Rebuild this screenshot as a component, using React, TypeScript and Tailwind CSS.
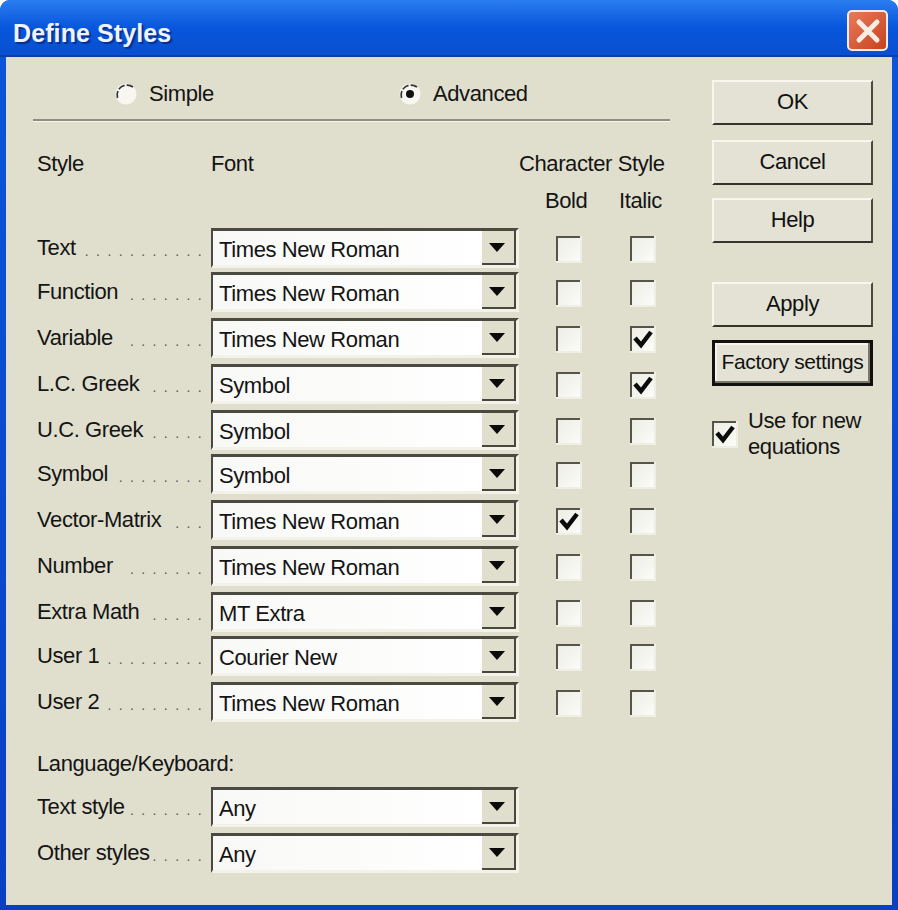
const rows = [
  { label: "Text", dots: 11, font: "Times New Roman", bold: false, italic: false, h: "h-[44px]" },
  { label: "Function", dots: 7, font: "Times New Roman", bold: false, italic: false, h: "h-[46px]" },
  { label: "Variable", dots: 7, font: "Times New Roman", bold: false, italic: true, h: "h-[46px]" },
  { label: "L.C. Greek", dots: 5, font: "Symbol", bold: false, italic: true, h: "h-[46px]" },
  { label: "U.C. Greek", dots: 5, font: "Symbol", bold: false, italic: false, h: "h-[44px]" },
  { label: "Symbol", dots: 8, font: "Symbol", bold: false, italic: false, h: "h-[46px]" },
  { label: "Vector-Matrix", dots: 3, font: "Times New Roman", bold: true, italic: false, h: "h-[46px]" },
  { label: "Number", dots: 7, font: "Times New Roman", bold: false, italic: false, h: "h-[46px]" },
  { label: "Extra Math", dots: 5, font: "MT Extra", bold: false, italic: false, h: "h-[44px]" },
  { label: "User 1", dots: 9, font: "Courier New", bold: false, italic: false, h: "h-[46px]" },
  { label: "User 2", dots: 9, font: "Times New Roman", bold: false, italic: false, h: "h-[46px]" },
];

function Check({ on }: { on: boolean }) {
  return (
    <span className="block w-[24px] h-[25px] bg-gradient-to-br from-[#eeeee6] to-[#fbfbf8] border-t-2 border-l-2 border-t-[#55554a] border-l-[#55554a] shadow-[1px_1px_0_1px_#efeee2]">
      {on && (
        <svg viewBox="0 0 22 23" className="w-[22px] h-[23px]">
          <path d="M3 10 L9 17 L19 4" fill="none" stroke="#0b0b0b" strokeWidth="4.5" />
        </svg>
      )}
    </span>
  );
}

function Radio({ on }: { on: boolean }) {
  return (
    <svg viewBox="0 0 24 24" className="w-[24px] h-[24px]">
      <circle cx="12" cy="12" r="10.5" fill="#f7f6f0" />
      <path d="M3.5 16 A 10 10 0 0 1 19 5" fill="none" stroke="#333" strokeWidth="1.7" strokeDasharray="7 2" />
      {on && <circle cx="12" cy="12" r="4" fill="#111" />}
    </svg>
  );
}

function Combo({ text }: { text: string }) {
  return (
    <div className="w-[308px] h-[40px] flex bg-white border-t-[3px] border-l-2 border-t-[#4a4a40] border-l-[#4a4a40] border-b-[3px] border-r-[3px] border-b-[#f3f2e8] border-r-[#f3f2e8]">
      <span className="flex-1 pl-[6px] leading-[38px] bg-gradient-to-r from-[#f8f8f6] to-white">{text}</span>
      <span className="w-[34px] pr-[2px] bg-[#e0dfce] border-r-2 border-b-2 border-r-[#47473d] border-b-[#47473d] flex items-center justify-center">
        <svg width="16" height="9" viewBox="0 0 16 9"><path d="M0 0H16L8 9Z" fill="#0a0a0a" /></svg>
      </span>
    </div>
  );
}

function Btn({ children, mt, def }: { children: string; mt: string; def?: boolean }) {
  return (
    <button
      className={`block w-[161px] text-center text-[#111] bg-[#e3e2d4] pb-[2px] ${mt} ${
        def
          ? "h-[46px] border-[3px] border-[#111] shadow-[inset_-2px_-2px_0_#77776a,inset_2px_2px_0_#f5f4ea] whitespace-nowrap text-[21px]"
          : "h-[45px] border-t-2 border-l-2 border-t-[#f8f7ee] border-l-[#f8f7ee] border-r-2 border-b-2 border-r-[#4a4a40] border-b-[#35352c]"
      }`}
    >
      {children}
    </button>
  );
}

function Label({ label, dots }: { label: string; dots: number }) {
  return (
    <div className="w-[174px] flex items-center justify-between pr-[2px] mt-[5px]">
      <span className="leading-[30px] whitespace-nowrap">{label}</span>
      <span className="text-[14px] tracking-[7.4px] text-[#555] whitespace-nowrap mt-[6px]">{".".repeat(dots)}</span>
    </div>
  );
}

export default function App() {
  return (
    <div className="w-[898px] h-[910px] flex flex-col overflow-hidden rounded-t-[10px] bg-[#0a4fd4] bg-gradient-to-b from-[#0a56dc] to-[#0a3fc4] font-['Liberation_Sans',sans-serif] text-[22px] tracking-[-0.4px] text-[#141414]">
      <div className="h-[57px] shrink-0 flex items-center justify-between pl-[13px] pr-[10px] pt-[6px] bg-gradient-to-b from-[#2a7cf0] via-[#0756dc] to-[#0a50d0] border-b-2 border-b-[#0b3ea8]">
        <span className="text-[25px] font-bold text-[#eef4ff] tracking-[0.1px] mt-[6px] [text-shadow:2px_2px_1px_#08308f]">Define Styles</span>
        <span className="w-[41px] h-[41px] rounded-[5px] border-2 border-[#f2ede8] bg-gradient-to-br from-[#e87a58] to-[#c8401c] flex items-center justify-center">
          <svg width="26" height="26" viewBox="0 0 26 26"><path d="M4 4L22 22M22 4L4 22" stroke="#f8ece4" strokeWidth="5" strokeLinecap="round" /></svg>
        </span>
      </div>

      <div className="flex ml-[6px] mr-[6px] mb-[5px] flex-1 bg-[#e0dfce]">
        <div className="w-[706px] pl-[27px]">
          <div className="flex items-center h-[64px] pt-[12px] w-[637px] border-b-2 border-b-[#8f8e7c] shadow-[0_1px_0_#f7f6ec]">
            <div className="flex items-center ml-[81px] w-[284px] gap-[11px] -mt-[1px]">
              <Radio on={false} />
              <span>Simple</span>
            </div>
            <div className="flex items-center gap-[11px] -mt-[1px]">
              <Radio on />
              <span>Advanced</span>
            </div>
          </div>

          <div className="flex pl-[4px] mt-[28px] h-[34px] leading-[30px]">
            <span className="w-[174px]">Style</span>
            <span className="w-[308px]">Font</span>
            <span className="whitespace-nowrap">Character Style</span>
          </div>
          <div className="flex pl-[4px] h-[34px] leading-[30px] mt-[3px]">
            <span className="w-[508px]" />
            <span className="w-[74px]">Bold</span>
            <span>Italic</span>
          </div>

          <div className="pl-[4px] mt-[8px]">
            {rows.map((r) => (
              <div key={r.label} className={`flex items-start ${r.h}`}>
                <Label label={r.label} dots={r.dots} />
                <Combo text={r.font} />
                <div className="w-[75px] ml-[37px] pt-[8px]"><Check on={r.bold} /></div>
                <div className="pt-[8px] -ml-[1px]"><Check on={r.italic} /></div>
              </div>
            ))}
            <div className="leading-[30px] mt-[21px]">Language/Keyboard:</div>
            <div className="mt-[8px]">
              <div className="flex items-start h-[46px]">
                <Label label="Text style" dots={7} />
                <Combo text="Any" />
              </div>
              <div className="flex items-start h-[46px]">
                <Label label="Other styles" dots={5} />
                <Combo text="Any" />
              </div>
            </div>
          </div>
        </div>

        <div className="w-[161px] pt-[23px]">
          <Btn mt="">OK</Btn>
          <Btn mt="mt-[15px]">Cancel</Btn>
          <Btn mt="mt-[13px]">Help</Btn>
          <Btn mt="mt-[39px]">Apply</Btn>
          <Btn mt="mt-[13px]" def>Factory settings</Btn>
          <div className="flex items-center mt-[20px]">
            <Check on />
            <span className="ml-[12px] mt-[2px] leading-[26px]">Use for new<br />equations</span>
          </div>
        </div>
      </div>
    </div>
  );
}
